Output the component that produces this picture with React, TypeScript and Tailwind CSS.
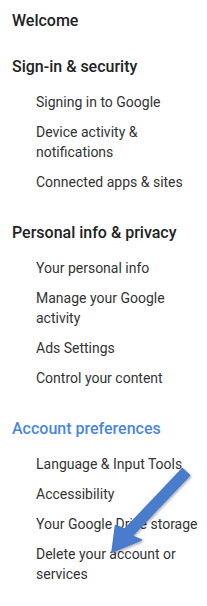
import React from "react";

const sections = [
  {
    title: "Sign-in & security",
    active: false,
    items: ["Signing in to Google", "Device activity & notifications", "Connected apps & sites"],
  },
  {
    title: "Personal info & privacy",
    active: false,
    items: ["Your personal info", "Manage your Google activity", "Ads Settings", "Control your content"],
  },
  {
    title: "Account preferences",
    active: true,
    items: [
      "Language & Input Tools",
      "Accessibility",
      "Your Google Drive storage",
      "Delete your account or services",
    ],
  },
];

function Arrow() {
  // blue annotation arrow drawn over the menu
  return (
    <svg
      className="pointer-events-none absolute left-0 top-0"
      width="207"
      height="606"
      viewBox="0 0 207 606"
    >
      <defs>
        <filter id="sh" x="-20%" y="-20%" width="140%" height="140%">
          <feDropShadow dx="1" dy="1.5" stdDeviation="1.2" floodColor="#000" floodOpacity="0.3" />
        </filter>
      </defs>
      <polygon
        filter="url(#sh)"
        fill="#4a7bcb"
        stroke="#4a7bcb"
        strokeWidth="1.5"
        strokeLinejoin="round"
        points="189.6,475.4 182.4,468.6 124.9,529.1 115.5,525.5 112,552 141.5,540 132.1,535.9"
      />
    </svg>
  );
}

export default function App() {
  return (
    <div className="relative w-[207px] h-[606px] bg-white overflow-hidden font-['Roboto',sans-serif]">
      <div className="flex flex-col pl-3 pt-[11px]">
        <h1 className="text-[16px] leading-5 font-medium text-[#222]">Welcome</h1>

        <div className="flex flex-col gap-[31px] mt-[26px]">
          {sections.map((s) => (
            <div key={s.title} className="flex flex-col gap-[15px]">
              <h2
                className={
                  s.active
                    ? "text-[16px] leading-5 font-medium text-[#4a86e0]"
                    : "text-[16px] leading-5 font-medium text-[#222]"
                }
              >
                {s.title}
              </h2>
              <ul className="flex flex-col gap-[10px] pl-6 pr-2">
                {s.items.map((it) => (
                  <li key={it} className="text-[14px] leading-5 text-[#333]">
                    {it}
                  </li>
                ))}
              </ul>
            </div>
          ))}
        </div>
      </div>
      <Arrow />
    </div>
  );
}
